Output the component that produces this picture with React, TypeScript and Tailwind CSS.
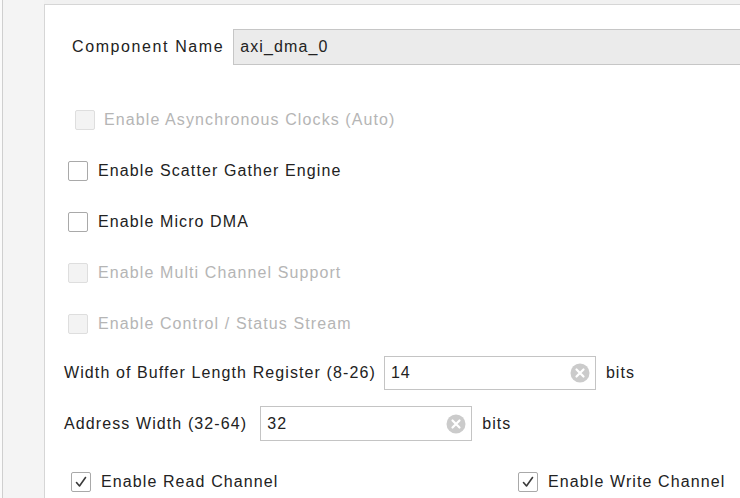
import type { ReactNode } from 'react';

const font = { fontFamily: '"Liberation Sans", Arial, sans-serif' };

function Check({ checked, disabled }: { checked?: boolean; disabled?: boolean }) {
  return (
    <span
      className={`flex h-[20px] w-[20px] shrink-0 items-center justify-center rounded-[2px] border ${
        disabled ? 'border-[#dedede] bg-[#f3f3f3]' : 'border-[#a9a9a9] bg-white'
      }`}
    >
      {checked && (
        <svg width="14" height="14" viewBox="0 0 14 14" fill="none">
          <path d="M2.5 7.5 L5.5 11 L11.5 2.5" stroke="#3a3a3a" strokeWidth="1.6" strokeLinecap="round" strokeLinejoin="round" />
        </svg>
      )}
    </span>
  );
}

function CheckRow({
  label,
  checked,
  disabled,
  className = '',
}: {
  label: string;
  checked?: boolean;
  disabled?: boolean;
  className?: string;
}) {
  return (
    <div className={`flex items-center gap-[10px] ${className}`}>
      <Check checked={checked} disabled={disabled} />
      <span className={disabled ? 'text-[#b5b5b5]' : 'text-[#222]'}>{label}</span>
    </div>
  );
}

function ClearInput({ value, width, height }: { value: string; width: string; height: string }) {
  return (
    <div className={`flex items-center justify-between border border-[#c4c4c4] bg-white pl-[6px] pr-[5px] ${width} ${height}`}>
      <span className="text-[#222]">{value}</span>
      <svg width="20" height="20" viewBox="0 0 20 20">
        <circle cx="10" cy="10" r="9.5" fill="#cbcbcb" />
        <path d="M6.5 6.5 L13.5 13.5 M13.5 6.5 L6.5 13.5" stroke="white" strokeWidth="2.2" strokeLinecap="round" />
      </svg>
    </div>
  );
}

function Row({ children, className = '' }: { children: ReactNode; className?: string }) {
  return <div className={`flex items-center ${className}`}>{children}</div>;
}

export default function App() {
  return (
    <div
      className="flex h-[498px] w-[740px] overflow-hidden bg-[#f1f1f1] text-[16px] tracking-[1.1px]"
      style={font}
    >
      {/* left rail */}
      <div className="flex w-[44px] shrink-0">
        <div className="w-[2px] bg-[#fafafa]" />
        <div className="w-[1px] bg-[#cfcfcf]" />
        <div className="flex-1 bg-[#f4f4f4]" />
      </div>

      {/* settings panel */}
      <div className="mt-[4px] flex flex-1 flex-col border-t border-l border-[#d6d6d6] bg-white">
        <Row className="mt-[24px] gap-[9px] pl-[27px]">
          <span className="tracking-[1.6px] text-[#222]">Component Name</span>
          <div className="-mr-[20px] flex h-[36px] flex-1 items-center border-y border-[#c6c6c6] border-l bg-[#ebebeb] pl-[6px] text-[#222]">
            axi_dma_0
          </div>
        </Row>

        <div className="mt-[29px] flex flex-col">
          <CheckRow label="Enable Asynchronous Clocks (Auto)" disabled className="h-[51px] pl-[30px] !gap-[9px]" />
          <CheckRow label="Enable Scatter Gather Engine" className="h-[51px] pl-[23px]" />
          <CheckRow label="Enable Micro DMA" className="h-[51px] pl-[23px]" />
          <CheckRow label="Enable Multi Channel Support" disabled className="h-[51px] pl-[23px]" />
          <CheckRow label="Enable Control / Status Stream" disabled className="h-[51px] pl-[23px]" />
        </div>

        <Row className="mt-[7px] gap-[8px] pl-[19px]">
          <span className="text-[#222]">Width of Buffer Length Register (8-26)</span>
          <ClearInput value="14" width="w-[212px]" height="h-[34px]" />
          <span className="ml-[2px] text-[#222]">bits</span>
        </Row>

        <Row className="mt-[16px] gap-[10px] pl-[19px]">
          <span className="mr-[3px] text-[#222]">Address Width (32-64)</span>
          <ClearInput value="32" width="w-[212px]" height="h-[35px]" />
          <span className="text-[#222]">bits</span>
        </Row>

        <Row className="mt-[29px] pl-[26px]">
          <div className="w-[447px]">
            <CheckRow label="Enable Read Channel" checked />
          </div>
          <CheckRow label="Enable Write Channel" checked />
        </Row>
      </div>
    </div>
  );
}
